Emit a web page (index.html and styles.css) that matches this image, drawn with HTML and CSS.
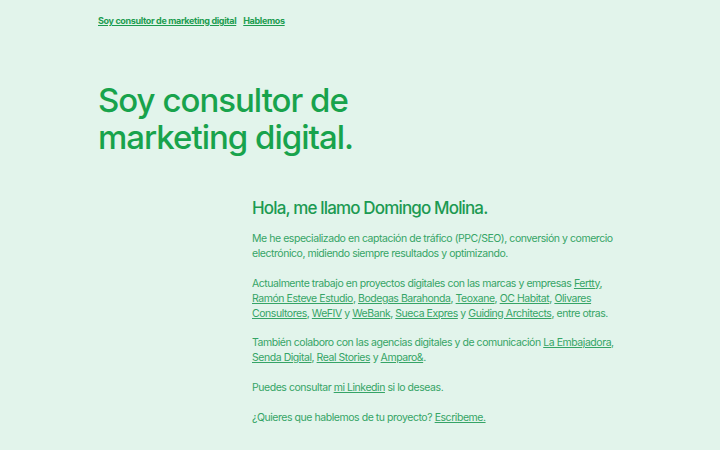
FILE: index.html
```html
<!DOCTYPE html>
<html lang="es">
<head>
<meta charset="utf-8">
<title>Domingo Molina</title>
<link rel="stylesheet" href="styles.css">
</head>
<body>
<div class="page">
  <nav class="nav">
    <a href="#">Soy consultor de marketing digital</a>
    <a href="#">Hablemos</a>
  </nav>
  <h1 class="title">Soy consultor de<br>marketing digital.</h1>
  <main class="content">
    <h2 class="hello">Hola, me llamo Domingo Molina.</h2>
    <p>Me he especializado en captación de tráfico (PPC/SEO), conversión y comercio electrónico, midiendo siempre resultados y optimizando.</p>
    <p>Actualmente trabajo en proyectos digitales con las marcas y empresas <a href="#">Fertty</a>, <a href="#">Ramón Esteve Estudio</a>, <a href="#">Bodegas Barahonda</a>, <a href="#">Teoxane</a>, <a href="#">OC Habitat</a>, <a href="#">Olivares Consultores</a>, <a href="#">WeFIV</a> y <a href="#">WeBank</a>, <a href="#">Sueca Expres</a> y <a href="#">Guiding Architects</a>, entre otras.</p>
    <p>También colaboro con las agencias digitales y de comunicación <a href="#">La Embajadora</a>, <a href="#">Senda Digital</a>, <a href="#">Real Stories</a> y <a href="#">Amparo&amp;</a>.</p>
    <p>Puedes consultar <a href="#">mi Linkedin</a> si lo deseas.</p>
    <p>¿Quieres que hablemos de tu proyecto? <a href="#">Escribeme.</a></p>
  </main>
</div>
</body>
</html>
```
FILE: styles.css
```css
html, body {
  margin: 0;
  padding: 0;
  background: #e2f4eb;
}
body {
  font-family: Inter, "Noto Sans", sans-serif;
  color: #35a466;
}
.page {
  width: 524px;
  margin: 0 auto;
  padding-top: 14px;
}
.nav {
  display: flex;
  gap: 7px;
  font-size: 9px;
  font-weight: 700;
  line-height: 13px;
  letter-spacing: -0.35px;
}
.nav a {
  color: #1c9c50;
  text-decoration: underline;
}
.title {
  margin: 55px 0 0 0;
  font-size: 33px;
  font-weight: 500;
  line-height: 37px;
  color: #18a34c;
  letter-spacing: -1px;
}
.content {
  margin: 41px 0 0 154px;
  font-size: 10.5px;
  line-height: 14.9px;
  letter-spacing: -0.45px;
}
.hello {
  margin: 0 0 13px 0;
  font-size: 17px;
  font-weight: 500;
  line-height: 22px;
  color: #1c9a52;
  letter-spacing: -0.85px;
}
.content p {
  margin: 0 0 14.9px 0;
}
.content a {
  color: #35a466;
  text-decoration: underline;
}
```
